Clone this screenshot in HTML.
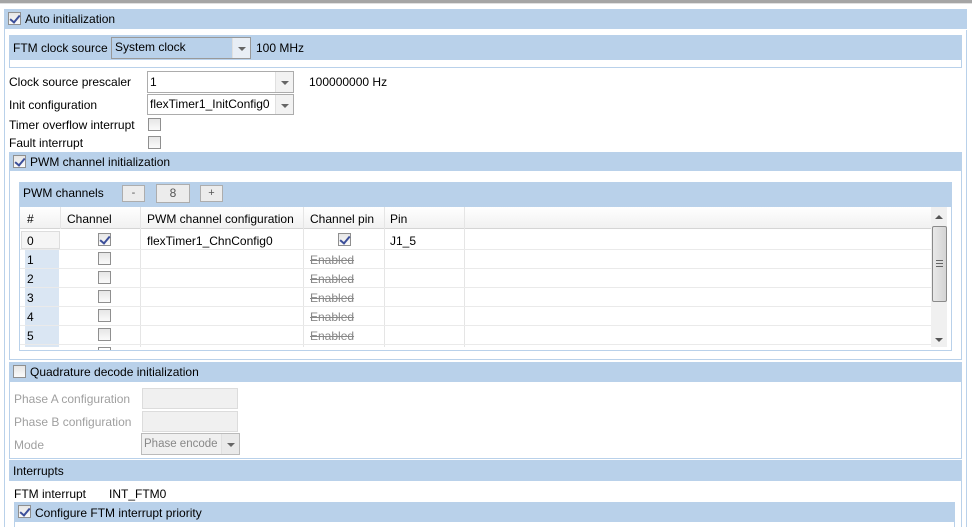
<!DOCTYPE html>
<html><head><style>
*{box-sizing:border-box;margin:0;padding:0}
body{width:972px;height:527px;background:#fff;position:relative;overflow:hidden;font-family:"Liberation Sans",sans-serif;font-size:12px;color:#000}
.a{position:absolute}
.hd{position:absolute;background:#b9d1ea}
.bx{position:absolute;border:1px solid #b9d1ea}
.t{position:absolute;white-space:nowrap;line-height:14px}
.cb{position:absolute;width:13px;height:13px;border:1px solid #8f8f8f;background:linear-gradient(#e6e6e6,#fafafa)}
.cb.on::after{content:"";position:absolute;left:3px;top:0px;width:4px;height:8px;border:solid #3c4f9a;border-width:0 2px 2px 0;transform:rotate(40deg)}
.combo{position:absolute;border:1px solid #acacac;background:#fff}
.combo .ar{position:absolute;right:0;top:0;bottom:0;width:18px;border-left:1px solid #e0e0e0;background:#f2f2f2}
.combo .ar::after{content:"";position:absolute;left:5px;top:50%;margin-top:-1px;border:4px solid transparent;border-top:4px solid #666;border-bottom:0}
.g{color:#a0a0a0}
.strike{color:#888;text-decoration:line-through}
.btn{position:absolute;border:1px solid #adadad;background:#ececec;text-align:center;font-size:11px;color:#555;line-height:15px}
</style></head><body>
<div class="a" style="left:0;top:0;width:972px;height:3px;background:#a5a5a5"></div>
<div class="a" style="left:0;top:3px;width:972px;height:1px;background:#e0e0e0"></div>

<div class="hd" style="left:4px;top:9px;width:963px;height:20px"></div>
<div class="cb on" style="left:8px;top:12px"></div>
<div class="t" style="left:25px;top:12px">Auto initialization</div>
<div class="a" style="left:4px;top:29px;width:1px;height:498px;background:#b9d1ea"></div>
<div class="a" style="left:966px;top:30px;width:1px;height:497px;background:#b9d1ea"></div>

<div class="bx" style="left:9px;top:35px;width:953px;height:33px"></div>
<div class="hd" style="left:9px;top:35px;width:953px;height:25px"></div>
<div class="t" style="left:13px;top:41px">FTM clock source</div>
<div class="combo" style="left:111px;top:37px;width:140px;height:22px;background:#b9d1ea;border-color:#999"><div class="t" style="left:3px;top:2px">System clock</div><div class="ar" style="background:#e8eef5"></div></div>
<div class="t" style="left:256px;top:41px">100 MHz</div>

<div class="t" style="left:9px;top:75px">Clock source prescaler</div>
<div class="combo" style="left:147px;top:71px;width:147px;height:22px"><div class="t" style="left:2px;top:3px">1</div><div class="ar"></div></div>
<div class="t" style="left:309px;top:75px">100000000 Hz</div>
<div class="t" style="left:9px;top:98px">Init configuration</div>
<div class="combo" style="left:147px;top:94px;width:147px;height:21px"><div class="t" style="left:2px;top:2px">flexTimer1_InitConfig0</div><div class="ar"></div></div>
<div class="t" style="left:9px;top:118px">Timer overflow interrupt</div>
<div class="cb" style="left:148px;top:118px"></div>
<div class="t" style="left:9px;top:136px">Fault interrupt</div>
<div class="cb" style="left:148px;top:136px"></div>

<div class="bx" style="left:9px;top:152px;width:953px;height:208px"></div>
<div class="hd" style="left:9px;top:152px;width:953px;height:19px"></div>
<div class="cb on" style="left:13px;top:155px"></div>
<div class="t" style="left:30px;top:155px">PWM channel initialization</div>

<div class="bx" style="left:19px;top:182px;width:933px;height:169px"></div>
<div class="hd" style="left:19px;top:182px;width:933px;height:25px"></div>
<div class="t" style="left:23px;top:186px">PWM channels</div>
<div class="btn" style="left:122px;top:185px;width:23px;height:17px">-</div>
<div class="btn" style="left:156px;top:184px;width:34px;height:19px;line-height:17px;font-size:12px">8</div>
<div class="btn" style="left:200px;top:185px;width:23px;height:17px">+</div>

<div class="a" style="left:20px;top:207px;width:911px;height:22px;background:linear-gradient(#fff,#f1f1f1);border-bottom:1px solid #d5d5d5"></div>
<div class="t" style="left:27px;top:212px">#</div>
<div class="t" style="left:67px;top:212px">Channel</div>
<div class="t" style="left:147px;top:212px">PWM channel configuration</div>
<div class="t" style="left:310px;top:212px">Channel pin</div>
<div class="t" style="left:390px;top:212px">Pin</div>
<div class="a" style="left:60px;top:207px;width:1px;height:22px;background:#e5e5e5"></div>
<div class="a" style="left:140px;top:207px;width:1px;height:140px;background:#e5e5e5"></div>
<div class="a" style="left:303px;top:207px;width:1px;height:140px;background:#e5e5e5"></div>
<div class="a" style="left:384px;top:207px;width:1px;height:140px;background:#e5e5e5"></div>
<div class="a" style="left:464px;top:207px;width:1px;height:140px;background:#e5e5e5"></div>

<div class="a" style="left:21px;top:231px;width:39px;height:18px;background:#f5f5f5;border:1px solid #ddd"></div>
<div class="t" style="left:27px;top:234px">0</div>
<div class="cb on" style="left:98px;top:233px"></div>
<div class="t" style="left:147px;top:234px">flexTimer1_ChnConfig0</div>
<div class="cb on" style="left:338px;top:233px"></div>
<div class="t" style="left:390px;top:234px">J1_5</div>
<div class="a" style="left:20px;top:249px;width:911px;height:1px;background:#eaeaea"></div>

<div class="a" style="left:25px;top:250px;width:34px;height:97px;background:#dae6f3"></div>
<div class="t" style="left:27px;top:253px">1</div><div class="cb" style="left:98px;top:252px"></div><div class="t strike" style="left:310px;top:253px">Enabled</div>
<div class="a" style="left:20px;top:268px;width:911px;height:1px;background:#eaeaea"></div>
<div class="t" style="left:27px;top:272px">2</div><div class="cb" style="left:98px;top:271px"></div><div class="t strike" style="left:310px;top:272px">Enabled</div>
<div class="a" style="left:20px;top:287px;width:911px;height:1px;background:#eaeaea"></div>
<div class="t" style="left:27px;top:291px">3</div><div class="cb" style="left:98px;top:290px"></div><div class="t strike" style="left:310px;top:291px">Enabled</div>
<div class="a" style="left:20px;top:306px;width:911px;height:1px;background:#eaeaea"></div>
<div class="t" style="left:27px;top:310px">4</div><div class="cb" style="left:98px;top:309px"></div><div class="t strike" style="left:310px;top:310px">Enabled</div>
<div class="a" style="left:20px;top:325px;width:911px;height:1px;background:#eaeaea"></div>
<div class="t" style="left:27px;top:329px">5</div><div class="cb" style="left:98px;top:328px"></div><div class="t strike" style="left:310px;top:329px">Enabled</div>
<div class="a" style="left:20px;top:344px;width:911px;height:1px;background:#eaeaea"></div>
<div class="a" style="left:98px;top:347px;width:13px;height:3px;border:1px solid #8f8f8f;border-bottom:0"></div>

<div class="a" style="left:931px;top:207px;width:16px;height:140px;background:#f0f0f0"></div>
<div class="a" style="left:935px;top:215px;border:4px solid transparent;border-bottom:4px solid #555;border-top:0"></div>
<div class="a" style="left:932px;top:226px;width:15px;height:76px;border:1px solid #8a8a8a;border-radius:2px;background:linear-gradient(90deg,#e8e8e8,#d4d4d4)"></div>
<div class="a" style="left:936px;top:260px;width:7px;height:7px;border-top:1px solid #666;border-bottom:1px solid #666"><div style="margin-top:2px;height:1px;background:#666"></div></div>
<div class="a" style="left:935px;top:338px;border:4px solid transparent;border-top:4px solid #555;border-bottom:0"></div>

<div class="bx" style="left:9px;top:362px;width:953px;height:97px"></div>
<div class="hd" style="left:9px;top:362px;width:953px;height:20px"></div>
<div class="cb" style="left:13px;top:365px"></div>
<div class="t" style="left:30px;top:365px">Quadrature decode initialization</div>
<div class="t g" style="left:14px;top:392px">Phase A configuration</div>
<div class="a" style="left:142px;top:388px;width:96px;height:21px;border:1px solid #dcdcdc;background:#f0f0f0"></div>
<div class="t g" style="left:14px;top:415px">Phase B configuration</div>
<div class="a" style="left:142px;top:411px;width:96px;height:21px;border:1px solid #dcdcdc;background:#f0f0f0"></div>
<div class="t g" style="left:14px;top:438px">Mode</div>
<div class="combo" style="left:141px;top:433px;width:99px;height:22px;border-color:#bbb;background:#f0f0f0"><div class="t" style="left:2px;top:3px;color:#888;font-size:11.5px">Phase encode</div><div class="ar" style="background:#eaeaea"></div></div>

<div class="hd" style="left:9px;top:460px;width:953px;height:21px"></div>
<div class="a" style="left:961px;top:481px;width:1px;height:46px;background:#b9d1ea"></div>
<div class="t" style="left:13px;top:464px">Interrupts</div>
<div class="t" style="left:14px;top:487px">FTM interrupt</div>
<div class="t" style="left:109px;top:487px">INT_FTM0</div>
<div class="hd" style="left:14px;top:502px;width:941px;height:20px"></div>
<div class="a" style="left:954px;top:522px;width:1px;height:5px;background:#b9d1ea"></div>
<div class="a" style="left:14px;top:522px;width:1px;height:5px;background:#b9d1ea"></div>
<div class="cb on" style="left:18px;top:505px"></div>
<div class="t" style="left:35px;top:506px">Configure FTM interrupt priority</div>
</body></html>
